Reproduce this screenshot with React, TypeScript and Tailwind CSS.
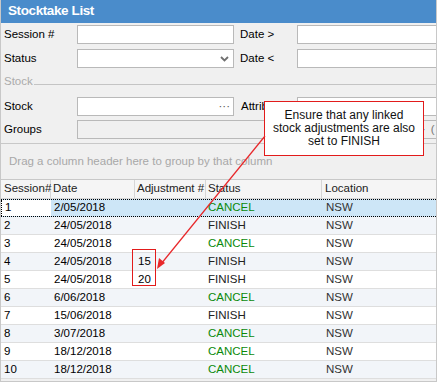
import React from "react";

const rows = [
  { s: "1", d: "2/05/2018", a: "", st: "CANCEL", l: "NSW" },
  { s: "2", d: "24/05/2018", a: "", st: "FINISH", l: "NSW" },
  { s: "3", d: "24/05/2018", a: "", st: "CANCEL", l: "NSW" },
  { s: "4", d: "24/05/2018", a: "15", st: "FINISH", l: "NSW" },
  { s: "5", d: "24/05/2018", a: "20", st: "FINISH", l: "NSW" },
  { s: "6", d: "6/06/2018", a: "", st: "CANCEL", l: "NSW" },
  { s: "7", d: "15/06/2018", a: "", st: "FINISH", l: "NSW" },
  { s: "8", d: "3/07/2018", a: "", st: "CANCEL", l: "NSW" },
  { s: "9", d: "18/12/2018", a: "", st: "CANCEL", l: "NSW" },
  { s: "10", d: "18/12/2018", a: "", st: "CANCEL", l: "NSW" },
];

export default function App() {
  return (
    <div
      className="relative w-[437px] h-[382px] overflow-hidden bg-[#f0f0f0] border-x border-b border-[#c8c8c8] text-[11.5px] text-black"
      style={{ fontFamily: '"Liberation Sans", Arial, sans-serif' }}
    >
      {/* Title */}
      <div className="h-[23px] bg-[#4a8ccb] flex items-center pl-[7px] text-white font-bold text-[13.5px] tracking-[-0.4px]">
        Stocktake List
      </div>

      {/* Form */}
      <div className="flex flex-col pt-[2px]">
        <div className="flex items-center h-[19px]">
          <div className="w-[76px] shrink-0 pl-[3px]">Session #</div>
          <div className="w-[157px] h-[19px] shrink-0 bg-white border border-[#b9b9b9]" />
          <div className="w-[63px] shrink-0 pl-[6px]">Date &gt;</div>
          <div className="w-[160px] h-[19px] shrink-0 bg-white border border-[#b9b9b9]" />
        </div>
        <div className="flex items-center h-[19px] mt-[5px]">
          <div className="w-[76px] shrink-0 pl-[3px]">Status</div>
          <div className="w-[157px] h-[19px] shrink-0 bg-white border border-[#b9b9b9] flex items-center justify-end pr-[4px]">
            <svg width="9" height="6" viewBox="0 0 9 6">
              <path d="M1 1 L4.5 4.5 L8 1" stroke="#707070" strokeWidth="1.8" fill="none" />
            </svg>
          </div>
          <div className="w-[63px] shrink-0 pl-[6px]">Date &lt;</div>
          <div className="w-[160px] h-[19px] shrink-0 bg-white border border-[#b9b9b9]" />
        </div>
        {/* Stock group */}
        <div className="flex items-center h-[16px] mt-[6px] pl-[3px]">
          <span className="text-[#ababab]">Stock</span>
          <div className="flex-1 h-px bg-[#c4c4c4] ml-[1px] mt-[4px]" />
        </div>
        <div className="flex items-center h-[19px] mt-[7px]">
          <div className="w-[76px] shrink-0 pl-[3px]">Stock</div>
          <div className="w-[157px] h-[19px] shrink-0 bg-white border border-[#b9b9b9] flex items-center justify-end pr-[3px] text-[#555] leading-none">
            ···
          </div>
          <div className="w-[63px] shrink-0 pl-[7px] whitespace-nowrap">Attributes</div>
          <div className="w-[160px] h-[19px] shrink-0 bg-white border border-[#b9b9b9]" />
        </div>
        <div className="flex items-center h-[19px] mt-[4px]">
          <div className="w-[76px] shrink-0 pl-[3px]">Groups</div>
          <div className="w-[380px] h-[19px] shrink-0 bg-[#f0f0f0] border border-[#b9b9b9] flex items-center pl-[340px] text-[#555] leading-none">
            <span>··</span>
            <span className="ml-[5px] text-[#777]">(</span>
          </div>
        </div>
      </div>

      {/* Group panel */}
      <div className="mt-[4px] border-t border-[#c8c8c8] h-[36px] flex items-center pl-[8px] text-[#a8a8a8] bg-[#f0f0f0]">
        Drag a column header here to group by that column
      </div>

      {/* Grid */}
      <div className="border-t border-[#c8c8c8] bg-white">
        <div className="flex h-[19px] bg-[#f5f5f5] border-b border-[#d6d6d6] text-[#222] items-center">
          <div className="w-[50px] shrink-0 pl-[3px] border-r border-[#d6d6d6] h-full flex items-center">Session#</div>
          <div className="w-[84px] shrink-0 pl-[2px] border-r border-[#d6d6d6] h-full flex items-center">Date</div>
          <div className="w-[71px] shrink-0 pl-[2px] border-r border-[#d6d6d6] h-full flex items-center">Adjustment #</div>
          <div className="w-[116px] shrink-0 pl-[2px] border-r border-[#d6d6d6] h-full flex items-center">Status</div>
          <div className="flex-1 pl-[3px] h-full flex items-center">Location</div>
        </div>
        {rows.map((r, i) => {
          const sel = i === 0;
          const alt = i % 2 === 1;
          const bg = sel ? "bg-[#cde6f7]" : alt ? "bg-[#f2f5f9]" : "bg-white";
          return (
            <div
              key={r.s}
              className={`flex h-[18px] items-center ${bg} ${
                sel ? "border-y border-dotted border-black" : "border-b border-[#dedede]"
              }`}
            >
              <div
                className={`w-[50px] shrink-0 pl-[3px] h-full flex items-center ${
                  sel ? "bg-white border-l border-dotted border-black" : ""
                }`}
              >
                {r.s}
              </div>
              <div className="w-[84px] shrink-0 pl-[3px]">{r.d}</div>
              <div className="w-[71px] shrink-0 pl-[3px]">{r.a}</div>
              <div className={`w-[116px] shrink-0 pl-[2px] ${r.st === "CANCEL" ? "text-[#0a8a0a]" : "text-[#222]"}`}>
                {r.st}
              </div>
              <div className="flex-1 pl-[4px] text-[#333]">{r.l}</div>
            </div>
          );
        })}
      </div>

      {/* Red box around adjustments */}
      <div className="absolute left-[131px] top-[249px] w-[24px] h-[37px] border border-[#e21b1b]" />

      {/* Callout */}
      <div className="absolute left-[263px] top-[101px] w-[160px] h-[55px] bg-white border border-[#e21b1b] flex items-center justify-center text-center leading-[13px] text-[#111] text-[12px]">
        <div>
          Ensure that any linked
          <br />
          stock adjustments are also
          <br />
          set to FINISH
        </div>
      </div>

      {/* Arrow */}
      <svg className="absolute left-0 top-0 pointer-events-none" width="437" height="382">
        <line x1="264" y1="136" x2="160" y2="264" stroke="#e8282b" strokeWidth="1.2" />
        <polygon points="156,269 158,258 164,263" fill="#e8282b" />
      </svg>
    </div>
  );
}
